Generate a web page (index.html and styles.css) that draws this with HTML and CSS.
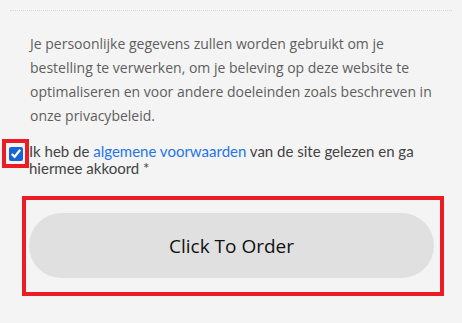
FILE: index.html
```html
<!DOCTYPE html>
<html lang="nl">
<head>
<meta charset="utf-8">
<title>Bestelling</title>
<link rel="stylesheet" href="styles.css">
</head>
<body>
<div class="page">
  <div class="rule"></div>
  <p class="privacy">Je persoonlijke gegevens zullen worden gebruikt om je bestelling te verwerken, om je beleving op deze website te optimaliseren en voor andere doeleinden zoals beschreven in onze privacybeleid.</p>
  <label class="terms">
    <span class="check-wrap"><input type="checkbox" class="check" checked></span>
    <span class="terms-text">Ik heb de <a href="#" class="link">algemene voorwaarden</a> van de site gelezen en ga hiermee akkoord *</span>
  </label>
  <div class="order-frame">
    <button type="button" class="order-btn">Click To Order</button>
  </div>
</div>
</body>
</html>
```

FILE: styles.css
```css
html, body {
  margin: 0;
  padding: 0;
  background: #f4f4f4;
}

.page {
  font-family: "Open Sans", "Noto Sans", sans-serif;
  padding-top: 10px;
}

.rule {
  margin: 0 10px;
  border-top: 1px dotted #d6d6d6;
}

.privacy {
  margin: 21px 30px 0;
  font-size: 14px;
  line-height: 24px;
  color: #5e5e5e;
}

.terms {
  display: flex;
  align-items: flex-start;
  margin-top: 15px;
  padding: 0 30px 0 9px;
  font-family: Lato, "Open Sans", sans-serif;
  font-size: 15px;
  line-height: 17px;
  color: #434343;
}

.check-wrap {
  position: relative;
  display: block;
  flex: none;
  width: 14px;
  height: 14px;
  margin-top: 4px;
  margin-right: 6px;
}

.check-wrap::after {
  content: "";
  position: absolute;
  left: -7px;
  top: -8px;
  right: -6px;
  bottom: -7px;
  border: 4px solid #ec1c24;
}

.check {
  display: block;
  width: 14px;
  height: 14px;
  margin: 0;
  accent-color: #1565d8;
}

.terms-text {
  flex: 1;
}

.link {
  color: #1f74ec;
  text-decoration: none;
}

.order-frame {
  margin: 19px 18px 0 22px;
  border: 4px solid #ec1c24;
  padding: 13px 6px 14px 3px;
}

.order-btn {
  display: block;
  width: 100%;
  height: 65px;
  border: none;
  border-radius: 33px;
  background: #e0e0e0;
  font-family: "Open Sans", "Noto Sans", sans-serif;
  font-size: 19px;
  color: #111;
  padding: 0;
  cursor: pointer;
}
```
